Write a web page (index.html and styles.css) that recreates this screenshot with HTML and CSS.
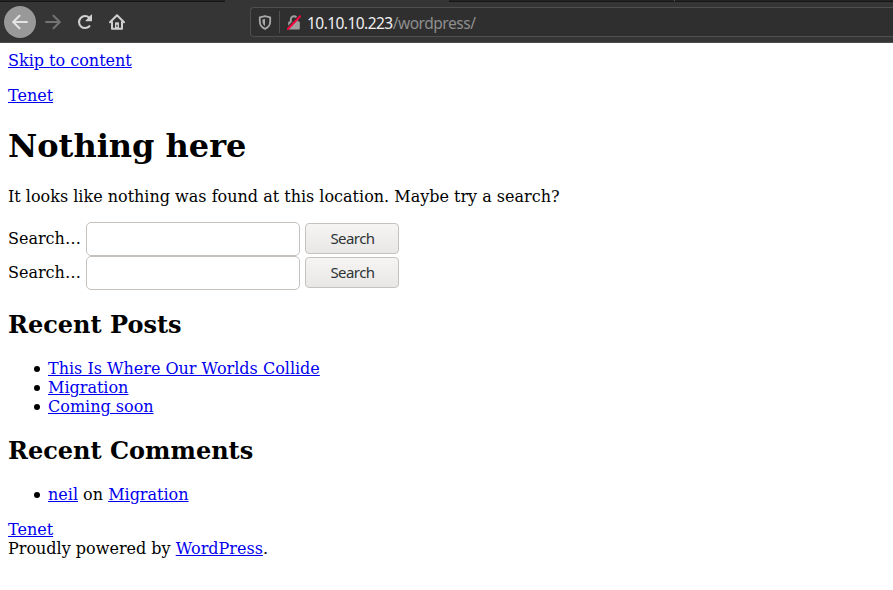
FILE: index.html
```html
<!DOCTYPE html>
<html lang="en">
<head>
<meta charset="utf-8">
<title>Page not found – Tenet</title>
<link rel="stylesheet" href="styles.css">
</head>
<body>
<header class="browser">
  <div class="tabs"><span class="tab"></span><span class="tab tab-active"></span><span class="tab"></span><span class="tab tab-last"></span></div>
  <div class="toolbar">
    <nav class="nav">
      <span class="back"><svg width="16" height="16" viewBox="0 0 16 16" fill="none" stroke="#e4e4e4" stroke-width="2" stroke-linecap="round" stroke-linejoin="round"><path d="M15 8H1.5M7.5 1.7 1.2 8l6.3 6.3"/></svg></span>
      <svg class="forward" width="16" height="16" viewBox="0 0 16 16" fill="none" stroke="#737373" stroke-width="2" stroke-linecap="round" stroke-linejoin="round"><path d="M1 8h13.5M8.5 1.7 14.8 8l-6.3 6.3"/></svg>
      <svg class="reload" width="16" height="16" viewBox="0 0 16 16"><path d="M12.4 12.2A6 6 0 1 1 12.2 3.7" fill="none" stroke="#d0d0d0" stroke-width="2.1" stroke-linecap="round"/><path d="M15 1.2v5.5a.6.6 0 0 1-.6.6H9a.5.5 0 0 1-.3-.9l5.4-5.6a.5.5 0 0 1 .9.4z" fill="#d0d0d0"/></svg>
      <svg class="home" width="16" height="16" viewBox="0 0 16 16" fill="none" stroke="#d0d0d0" stroke-width="2" stroke-linecap="round" stroke-linejoin="round"><path d="M1 8.2 8 1.2l7 7M3 8v6.8h10V8"/><path d="M6 14V9.2a1 1 0 0 1 1-1h2a1 1 0 0 1 1 1V14z" fill="#d0d0d0" stroke="none"/><path d="M8 11.2v1.2" stroke="#353535" stroke-width="1.2"/></svg>
    </nav>
    <div class="urlbar">
      <svg class="shield" width="14" height="15" viewBox="0 0 14 15"><path d="M7 1.2 12.2 2.3V6.5C12.2 10 10 12.6 7 13.8 4 12.6 1.8 10 1.8 6.5V2.3z" fill="none" stroke="#a9a9a9" stroke-width="1.8" stroke-linejoin="round"/><path d="M7 4v7C5.3 10 4.5 8.3 4.5 6.5v-2z" fill="#a9a9a9"/></svg>
      <span class="divider"></span>
      <svg class="lock" width="14" height="15" viewBox="0 0 14 15"><path d="M3.8 7V4.5a3.2 3.2 0 0 1 6.4 0V7" fill="none" stroke="#a0a0a0" stroke-width="1.9"/><rect x="1.2" y="6.5" width="11.6" height="8" rx="1" fill="#a0a0a0"/><path d="M.8 12.4 12.4.8" stroke="#303030" stroke-width="2"/><path d="M.9 14 13.2 1.2" stroke="#f5063f" stroke-width="2" stroke-linecap="round"/></svg>
      <span class="url">10.10.10.223<span class="path">/wordpress/</span></span>
    </div>
  </div>
</header>
<main class="page">
  <a href="#content">Skip to content</a>
  <p><a href="#">Tenet</a></p>
  <h1 id="content">Nothing here</h1>
  <p>It looks like nothing was found at this location. Maybe try a search?</p>
  <form class="search"><label for="s1">Search…</label><input id="s1" type="search"><button type="button">Search</button></form>
  <form class="search"><label for="s2">Search…</label><input id="s2" type="search"><button type="button">Search</button></form>
  <h2>Recent Posts</h2>
  <ul>
    <li><a href="#">This Is Where Our Worlds Collide</a></li>
    <li><a href="#">Migration</a></li>
    <li><a href="#">Coming soon</a></li>
  </ul>
  <h2>Recent Comments</h2>
  <ul class="comments">
    <li><a href="#">neil</a> on <a href="#">Migration</a></li>
  </ul>
  <footer><a href="#">Tenet</a><br>Proudly powered by <a href="#">WordPress</a>.</footer>
</main>
</body>
</html>
```
FILE: styles.css
```css
* { box-sizing: border-box; }
body {
  margin: 0;
  background: #fff;
  color: #000;
  font: 16px/19px "DejaVu Serif", serif;
  overflow: hidden;
}
.browser {
  height: 43px;
  background: #353535;
  border-bottom: 1px solid #4b4b4b;
}
.tabs { display: flex; height: 2px; }
.tab { width: 225px; background: #242424; border-bottom: 1px solid #161616; }
.tab-active { width: 224px; background: #353535; border: 0; }
.tab-last { flex: 1; border-left: 1px solid #555; }
.toolbar { display: flex; height: 40px; align-items: center; }
.nav { display: flex; align-items: center; width: 250px; padding-left: 4px; }
.nav svg { display: block; }
.back {
  display: flex;
  align-items: center;
  justify-content: center;
  width: 32px;
  height: 32px;
  border-radius: 50%;
  background: #999;
  box-shadow: 0 0 1px #222;
}
.forward { margin-left: 9px; }
.reload, .home { margin-left: 16px; }
.urlbar {
  display: flex;
  align-items: center;
  flex: 1;
  height: 30px;
  padding-left: 7px;
  background: #2f2f2f;
  border: 1px solid #4f4f4f;
  border-right: 0;
  border-radius: 4px 0 0 4px;
}
.divider { width: 1px; height: 22px; margin: 0 7px; background: #4f4f4f; }
.url { margin-left: 6px; padding-top: 1px; color: #f0f0f0; font: 15.5px/20px "Noto Sans", sans-serif; letter-spacing: -0.55px; }
.path { color: #8e8e8e; letter-spacing: -0.47px; }
.page { padding: 8px; }
a { color: #0000ee; }
p { margin: 16px 0; }
h1 { margin: 22px 0; font-size: 32px; line-height: 38px; }
h2 { margin: 21px 0 20px; font-size: 24px; line-height: 28px; }
ul { margin: 20px 0; padding-left: 40px; list-style: none; }
li::before {
  content: "";
  display: inline-block;
  width: 6px;
  height: 6px;
  margin: 0 8px 0 -14px;
  border-radius: 50%;
  background: #000;
  vertical-align: 2px;
}
.comments { margin-bottom: 16px; }
.search { display: flex; align-items: center; height: 34px; }
.search label { width: 78px; margin-top: -2px; }
.search input {
  width: 214px;
  height: 34px;
  margin: 0 5px 0 0;
  border: 1px solid #c6c1bc;
  border-radius: 5px;
  background: #fff;
}
.search button {
  width: 94px;
  height: 31px;
  margin: 0 0 1px;
  padding: 0 0 2px 1px;
  border: 1px solid #c6c1bc;
  border-radius: 4px;
  background: linear-gradient(#f6f5f4, #e9e7e5);
  color: #2e3436;
  font: 15px/20px "Noto Sans", sans-serif;
  letter-spacing: -0.55px;
}
```
